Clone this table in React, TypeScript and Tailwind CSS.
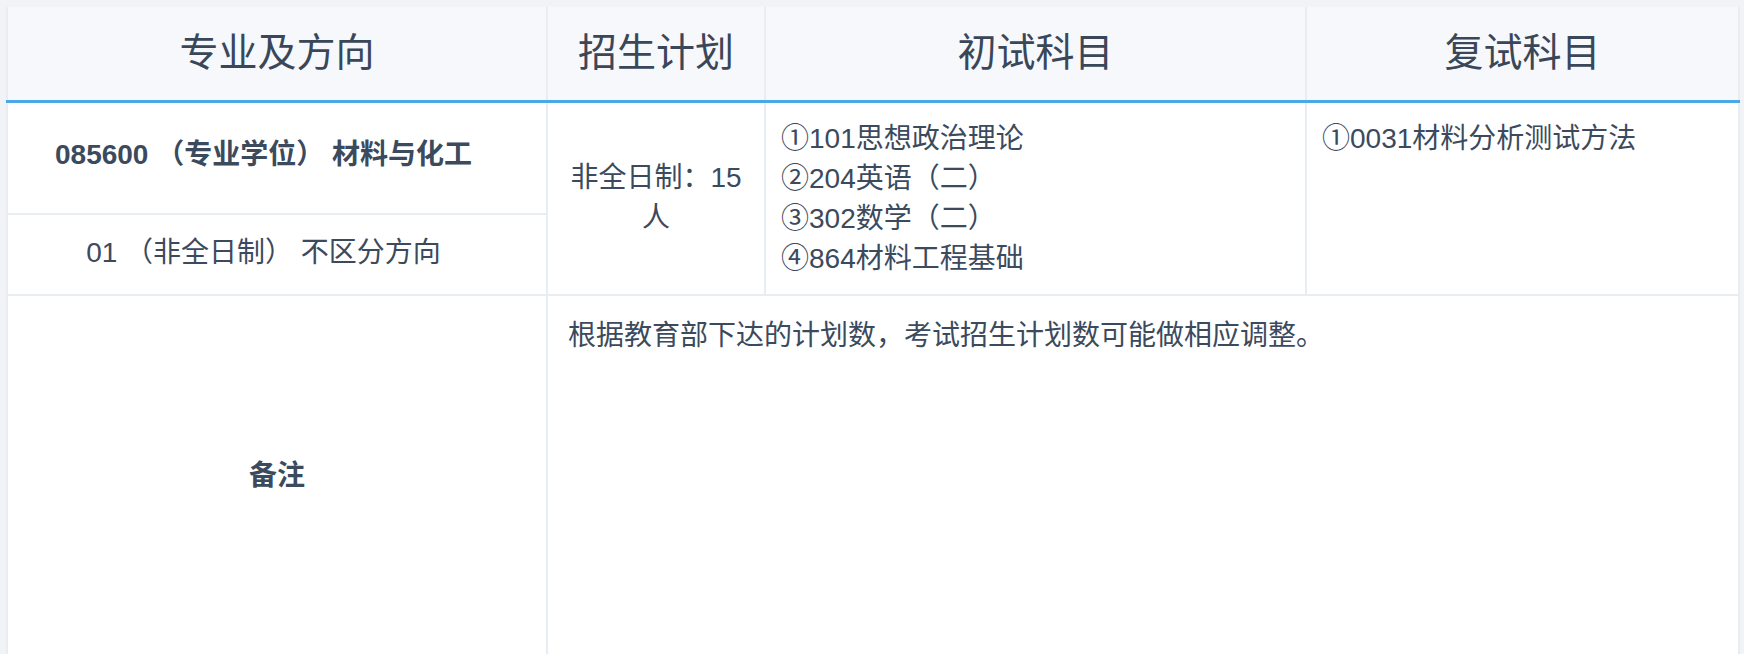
export default function App() {
  const font = {
    fontFamily: '"Liberation Sans", "Noto Sans CJK SC", sans-serif',
  };

  return (
    <div
      className="min-h-screen bg-[#f1f3f6] px-[6px] pt-[7px] text-[#3b4a5d]"
      style={font}
    >
      <table className="w-[1732px] table-fixed border-collapse bg-white">
        <colgroup>
          <col className="w-[540px]" />
          <col className="w-[218px]" />
          <col className="w-[541px]" />
          <col className="w-[433px]" />
        </colgroup>
        <thead>
          <tr className="h-[94px] border-b-[3px] border-b-[#4aa8e6] bg-[#f6f8fc]">
            {["专业及方向", "招生计划", "初试科目", "复试科目"].map((h) => (
              <th
                key={h}
                className="border-x-2 border-x-[#e8edf2] pb-[2px] text-center align-middle text-[39px] font-normal leading-none text-[#3a4759]"
              >
                {h}
              </th>
            ))}
          </tr>
        </thead>
        <tbody className="text-[28px] leading-[40px]">
          <tr className="h-[113px]">
            <td className="border-2 border-[#e8edf2] pr-[27px] pb-[6px] text-center align-middle font-semibold">
              085600 （专业学位） 材料与化工
            </td>
            <td
              rowSpan={2}
              className="border-2 border-[#e8edf2] px-4 text-center align-middle"
            >
              非全日制：15 人
            </td>
            <td
              rowSpan={2}
              className="border-2 border-[#e8edf2] px-[15px] pt-[16px] align-top"
            >
              <p>①101思想政治理论</p>
              <p>②204英语（二）</p>
              <p>③302数学（二）</p>
              <p>④864材料工程基础</p>
            </td>
            <td
              rowSpan={2}
              className="border-2 border-[#e8edf2] px-[15px] pt-[16px] align-top"
            >
              ①0031材料分析测试方法
            </td>
          </tr>
          <tr className="h-[81px]">
            <td className="border-2 border-[#e8edf2] pr-[27px] pb-[3px] text-center align-middle">
              01 （非全日制） 不区分方向
            </td>
          </tr>
          <tr className="h-[362px]">
            <td className="border-2 border-[#e8edf2] text-center align-middle font-semibold">
              备注
            </td>
            <td
              colSpan={3}
              className="border-2 border-[#e8edf2] px-5 pt-[20px] align-top"
            >
              根据教育部下达的计划数，考试招生计划数可能做相应调整。
            </td>
          </tr>
        </tbody>
      </table>
    </div>
  );
}
